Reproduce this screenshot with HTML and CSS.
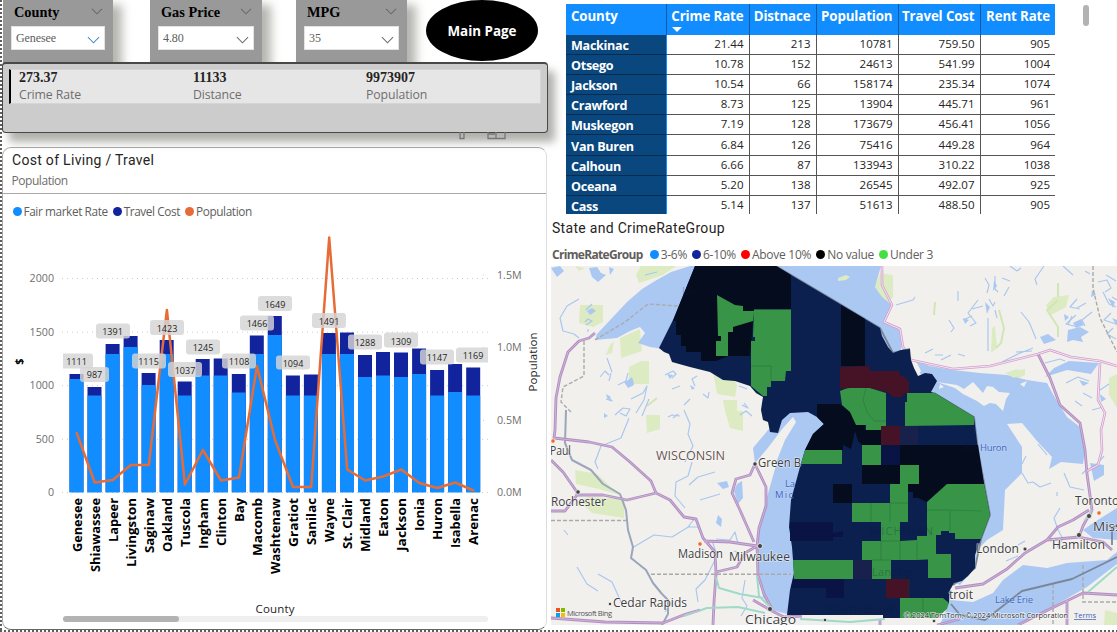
FILE: index.html
```html
<!DOCTYPE html>
<html lang="en">
<head>
<meta charset="utf-8">
<title>Michigan Cost of Living</title>
<link rel="stylesheet" href="styles.css">
</head>
<body>
<main class="report">
  <section class="left">
    <header class="filters">
      <div class="slicer"><div class="slicer-head"><span>County</span><svg class="chev" viewBox="0 0 12 7"><path d="M1 .8 6 5.8 11 .8"/></svg></div>
        <div class="select"><span>Genesee</span><svg class="chev big blue" viewBox="0 0 14 8"><path d="M1 1 7 7 13 1"/></svg></div></div>
      <div class="slicer"><div class="slicer-head"><span>Gas Price</span><svg class="chev" viewBox="0 0 12 7"><path d="M1 .8 6 5.8 11 .8"/></svg></div>
        <div class="select"><span>4.80</span><svg class="chev big" viewBox="0 0 14 8"><path d="M1 1 7 7 13 1"/></svg></div></div>
      <div class="slicer"><div class="slicer-head"><span>MPG</span><svg class="chev" viewBox="0 0 12 7"><path d="M1 .8 6 5.8 11 .8"/></svg></div>
        <div class="select"><span>35</span><svg class="chev big" viewBox="0 0 14 8"><path d="M1 1 7 7 13 1"/></svg></div></div>
      <button class="main-page">Main Page</button>
    </header>
    <div class="summary">
      <div class="metrics">
        <div class="metric"><b>273.37</b><span>Crime Rate</span></div>
        <div class="metric"><b>11133</b><span>Distance</span></div>
        <div class="metric"><b>9973907</b><span>Population</span></div>
      </div>
      <svg class="visual-icons" viewBox="0 0 48 8"><path d="M1 0V6.5H5V0M29 0V6.5H46V0M29 2H36M37 0V6.5"/></svg>
    </div>
    <article class="chart">
      <h2 class="title">Cost of Living / Travel</h2>
      <p class="subtitle">Population</p>
      <div class="legend"><span class="key fair">Fair market Rate</span><span class="key travel">Travel Cost</span><span class="key pop">Population</span></div>
      <svg class="plot" viewBox="3 222 544 407">
        <path class="grid" d="M62 278.5H488M62 332.2H488M62 385.7H488M62 439.3H488M62 492.5H488M483 275H488M483 347.5H488M483 420.5H488"/>
        <path class="bar-travel" d="M69.5 374h14V492h-14zM87.5 387h14V492h-14zM105.6 344h14V492h-14zM123.6 336h14V492h-14zM141.6 373h14V492h-14zM159.7 340h14V492h-14zM177.7 381.5h14V492h-14zM195.7 359h14V492h-14zM213.7 358.5h14V492h-14zM231.8 374h14V492h-14zM249.8 335.5h14V492h-14zM267.8 316h14V492h-14zM285.9 375.5h14V492h-14zM303.9 374.5h14V492h-14zM321.9 333h14V492h-14zM340 332.5h14V492h-14zM358 355h14V492h-14zM376 352h14V492h-14zM394 352.5h14V492h-14zM412.1 348.5h14V492h-14zM430.1 370h14V492h-14zM448.1 364h14V492h-14zM466.2 367.5h14V492h-14z"/>
        <path class="bar-fair" d="M69.5 379h14V492.5h-14zM87.5 395.5h14V492.5h-14zM105.6 354h14V492.5h-14zM123.6 347h14V492.5h-14zM141.6 385h14V492.5h-14zM159.7 354h14V492.5h-14zM177.7 395.5h14V492.5h-14zM195.7 375.5h14V492.5h-14zM213.7 375.5h14V492.5h-14zM231.8 392.5h14V492.5h-14zM249.8 354h14V492.5h-14zM267.8 335h14V492.5h-14zM285.9 395.5h14V492.5h-14zM303.9 395.5h14V492.5h-14zM321.9 354h14V492.5h-14zM340 354h14V492.5h-14zM358 377h14V492.5h-14zM376 375.5h14V492.5h-14zM394 377h14V492.5h-14zM412.1 374h14V492.5h-14zM430.1 395.5h14V492.5h-14zM448.1 392h14V492.5h-14zM466.2 395.5h14V492.5h-14z"/>
        <path class="line" d="M76.7 433 94.7 482.5 112.8 480 130.8 465 148.8 465 166.9 310 184.9 484.5 202.9 450 221 480.5 239 477.5 257 366 275 440 293 487 311.2 487 329.2 237.5 347.2 469.5 365.2 480.5 383.2 476.5 401.3 469.5 419.3 483 437.3 488 455.3 482.5 473.4 490.5"/>
        <g class="tags"><path d="M63 353.500h27a3 3 0 0 1 3 3v9a3 3 0 0 1-3 3h-27z"/><rect x="80" y="367" width="29" height="15" rx="3"/><rect x="96" y="323.500" width="34" height="15" rx="3"/><rect x="132" y="353.500" width="34" height="15" rx="3"/><rect x="150" y="320" width="34" height="15" rx="3"/><rect x="168" y="362" width="34" height="15" rx="3"/><rect x="186" y="339.500" width="34" height="15" rx="3"/><rect x="222" y="353.500" width="34" height="15" rx="3"/><rect x="240" y="315.500" width="34" height="15" rx="3"/><rect x="258" y="296" width="34" height="15" rx="3"/><rect x="276" y="355.500" width="34" height="14" rx="3"/><rect x="312" y="313" width="34" height="15" rx="3"/><rect x="348" y="334.500" width="34" height="15" rx="3"/><rect x="384" y="332.500" width="34" height="15" rx="3"/><rect x="420" y="349.500" width="34" height="15" rx="3"/><path d="M488 347.500h-29a3 3 0 0 0-3 3v9a3 3 0 0 0 3 3h29z"/></g>
        <g class="tag-text"><text x="76.500" y="365">1111</text><text x="94.500" y="378">987</text><text x="112.500" y="335">1391</text><text x="148.500" y="365">1115</text><text x="167" y="332">1423</text><text x="185" y="373.500">1037</text><text x="203" y="351">1245</text><text x="239" y="365">1108</text><text x="257" y="327">1466</text><text x="275" y="307.500">1649</text><text x="293" y="367">1094</text><text x="329" y="324.500">1491</text><text x="365" y="346">1288</text><text x="401" y="344.500">1309</text><text x="437" y="361">1147</text><text x="473" y="359">1169</text></g>
        <g class="axis end"><text x="54" y="282">2000</text><text x="54" y="336">1500</text><text x="54" y="389">1000</text><text x="54" y="443">500</text><text x="54" y="496">0</text></g>
        <g class="axis"><text x="497" y="279">1.5M</text><text x="497" y="351">1.0M</text><text x="497" y="424">0.5M</text><text x="497" y="496">0.0M</text></g>
        <g class="counties"><text transform="translate(81.500 498)rotate(-90)" textLength="54" lengthAdjust="spacingAndGlyphs">Genesee</text><text transform="translate(99.500 498)rotate(-90)" textLength="74" lengthAdjust="spacingAndGlyphs">Shiawassee</text><text transform="translate(117.500 498)rotate(-90)" textLength="44" lengthAdjust="spacingAndGlyphs">Lapeer</text><text transform="translate(135.500 498)rotate(-90)" textLength="69" lengthAdjust="spacingAndGlyphs">Livingston</text><text transform="translate(153.500 498)rotate(-90)" textLength="55" lengthAdjust="spacingAndGlyphs">Saginaw</text><text transform="translate(171.500 498)rotate(-90)" textLength="54" lengthAdjust="spacingAndGlyphs">Oakland</text><text transform="translate(189.500 498)rotate(-90)" textLength="49" lengthAdjust="spacingAndGlyphs">Tuscola</text><text transform="translate(207.500 498)rotate(-90)" textLength="51" lengthAdjust="spacingAndGlyphs">Ingham</text><text transform="translate(225.500 498)rotate(-90)" textLength="48" lengthAdjust="spacingAndGlyphs">Clinton</text><text transform="translate(243.500 498)rotate(-90)" textLength="24" lengthAdjust="spacingAndGlyphs">Bay</text><text transform="translate(261.500 498)rotate(-90)" textLength="58" lengthAdjust="spacingAndGlyphs">Macomb</text><text transform="translate(279.500 498)rotate(-90)" textLength="76" lengthAdjust="spacingAndGlyphs">Washtenaw</text><text transform="translate(297.500 498)rotate(-90)" textLength="49" lengthAdjust="spacingAndGlyphs">Gratiot</text><text transform="translate(315.500 498)rotate(-90)" textLength="47" lengthAdjust="spacingAndGlyphs">Sanilac</text><text transform="translate(333.500 498)rotate(-90)" textLength="44" lengthAdjust="spacingAndGlyphs">Wayne</text><text transform="translate(351.500 498)rotate(-90)" textLength="51" lengthAdjust="spacingAndGlyphs">St. Clair</text><text transform="translate(369.500 498)rotate(-90)" textLength="54" lengthAdjust="spacingAndGlyphs">Midland</text><text transform="translate(387.500 498)rotate(-90)" textLength="39" lengthAdjust="spacingAndGlyphs">Eaton</text><text transform="translate(405.500 498)rotate(-90)" textLength="53" lengthAdjust="spacingAndGlyphs">Jackson</text><text transform="translate(423.500 498)rotate(-90)" textLength="33" lengthAdjust="spacingAndGlyphs">Ionia</text><text transform="translate(441.500 498)rotate(-90)" textLength="42" lengthAdjust="spacingAndGlyphs">Huron</text><text transform="translate(459.500 498)rotate(-90)" textLength="50" lengthAdjust="spacingAndGlyphs">Isabella</text><text transform="translate(477.500 498)rotate(-90)" textLength="47" lengthAdjust="spacingAndGlyphs">Arenac</text></g>
        <text class="dollar" transform="translate(22.500 361.500)rotate(-90)">$</text>
        <text class="axis-title" transform="translate(537 362)rotate(-90)" textLength="59">Population</text>
        <text class="axis-title" x="275" y="613" textLength="39">County</text>
        <rect class="track" x="63" y="616" width="425" height="6" rx="3"/><rect class="thumb" x="63" y="616" width="116" height="6" rx="3"/>
      </svg>
    </article>
  </section>
  <section class="right">
    <div class="table-area">
      <table class="rates">
        <colgroup><col class="c1"><col class="c2"><col class="c3"><col class="c4"><col class="c5"><col class="c6"></colgroup>
        <thead><tr><th>County</th><th class="sorted">Crime Rate</th><th>Distnace</th><th>Population</th><th>Travel Cost</th><th>Rent Rate</th></tr></thead>
        <tbody>
          <tr><th>Mackinac</th><td>21.44</td><td>213</td><td>10781</td><td>759.50</td><td>905</td></tr>
          <tr><th>Otsego</th><td>10.78</td><td>152</td><td>24613</td><td>541.99</td><td>1004</td></tr>
          <tr><th>Jackson</th><td>10.54</td><td>66</td><td>158174</td><td>235.34</td><td>1074</td></tr>
          <tr><th>Crawford</th><td>8.73</td><td>125</td><td>13904</td><td>445.71</td><td>961</td></tr>
          <tr><th>Muskegon</th><td>7.19</td><td>128</td><td>173679</td><td>456.41</td><td>1056</td></tr>
          <tr><th>Van Buren</th><td>6.84</td><td>126</td><td>75416</td><td>449.28</td><td>964</td></tr>
          <tr><th>Calhoun</th><td>6.66</td><td>87</td><td>133943</td><td>310.22</td><td>1038</td></tr>
          <tr><th>Oceana</th><td>5.20</td><td>138</td><td>26545</td><td>492.07</td><td>925</td></tr>
          <tr><th>Cass</th><td>5.14</td><td>137</td><td>51613</td><td>488.50</td><td>905</td></tr>
        </tbody>
      </table>
      <i class="scroll"></i>
    </div>
    <h2 class="title map-title">State and CrimeRateGroup</h2>
    <div class="legend map-legend"><b>CrimeRateGroup</b><span class="key fair">3-6%</span><span class="key travel">6-10%</span><span class="key above">Above 10%</span><span class="key none">No value</span><span class="key under">Under 3</span></div>
    <svg class="map" viewBox="551 266 566 359">
      <rect class="land" x="551" y="266" width="566" height="359"/>
      <g class="park">
        <path d="M580 305h23v17l-10 5-14-4zM641 266h35l-13 9-24 8-3-8zM620 338l20-9 2 22-21 7zM629 367l12-6h8v23h-20zM713 371l16-2 8 16-2 12-18-3zM723 400h14v15l-12-4zM646 415h14v14l-13 4zM725 411h18v20l-13-3zM640 266l12 1-5 9zM575 470l22 4 15 14 11 8-24-7-23-5zM588 497l37 2-1 19-32-5-13-12zM880 273l13 2v22l-6 6-9-7-3-10zM1046 305l8-8 15-2-3 12-15 8zM1010 372l15-3v6l-8 4-9-4zM1109 378l8-4v34l-8-13zM1105 610l12 3v12h-13zM992 328l3-2 2 22-6 5zM575 266l10 2-6 3zM610 345l4-4-2 12-6 2z"/>
        <path class="park-line" d="M1058 300l-11 10 11 17v10M935 302l-1 13M999 310l5 18-3 15-5 5M1058 283v14M657 398l-10 8"/>
      </g>
      <g class="water">
        <path d="M690 266 671 272 655 281 642 289 627 302 612 318 597 334 595 340 617 338 630 331 640 327 645 333 638 343 650 347 670 350 710 266ZM770 266H881L875 287 882 297 892 305 884 322 900 330 902 345 898 360 840 320Z"/>
        <path d="M910 359 930 366 953 370 980 373 1007 375 1027 380 1047 383 1054 396 1067 417 1080 427 1085 450 1083 464 1061 462 1049 469 1052 457 1037 441 1022 423 1007 424 1022 447 1022 473 1005 490 1003 530 987 540 977 550 975 568 960 585 950 580 930 450 925 380Z"/>
        <path d="M755 463 753 448 768 430 790 412H811L826 424 810 460 800 614H787L772 610 763 597 759 570 757 543 760 523 767 497 777 462ZM950 600 973 602 993 593 1003 580 1023 565 1047 568 1067 563 1107 560 1117 552V564L1087 587 1073 595 1047 610 1018 625H940ZM1117 508 1093 523 1083 530 1093 538 1117 540ZM737 484l5-3 1 17-5 6-4-13zM1054 368l15-7 30 2-8 11-24-4-22 7zM1090 463l14 2v10l-10 6z"/>
        <path d="M551 268l9-2 4 5-7 6zM589 268l8-1 4 6 5 2-8 7-6-5zM609 267l5 2-4 6zM1040 337l8-3 8 6-12 4zM1068 330l12-3 9 5-8 5 2 5-10-2-6 2zM628 380l4-3 2 6-4 4zM717 483l10-2 2 6-6 2zM718 515l4 4-1 8-5-4z"/>
      </g>
      <g class="land"><path d="M937 382 957 385 964 389 973 382 983 393 987 386 993 387 999 392 1010 393 1006 399 1003 411 996 404 990 403 984 406 977 401 963 394 955 388ZM755 463 767 449 783 428 793 417 796 422 785 440 777 460 767 480ZM912 360l5 3 4 8-3 4-6-10zM940 384l4 3-5 2zM1020 384l7-3-3 6zM1030 374l6 1-3 5z"/></g>
      <path class="park" d="M838 278l8-3 4 2-4 3-8 1zM1005 373l12-4 5 4-8 5z"/>
      <g class="streams">
        <path d="M579 299l-12 7-7 12 3 13 11 3 5 4M586 310l6-6M585 322l3-3 4 2-6 4M588 329v3M607 358l5 14M618 385l8-4 2-8M631 399l12-6 4-7-3 14-8 13M665 375l8-4 3 3-4 4M680 386l-8 3M690 399l-6 6M703 394l5 4 1-6M734 372l5 3 5-3M747 389l-8-3M607 396l5 5-6-2M615 415l8-7 7 1-4 7-6-3M668 417l4-2 8 1M695 386l-3-7 5-3M600 377l5-6 4 4M742 405l6 3-4-5M611 373l-2 8M649 399l-7 17M673 418l5-4M645 275l12-3M660 308l-6 6M636 324l6-6M650 312l2-4"/>
        <path d="M684 410l6 14-2 10 5 12-8 16M692 462l-4 14-12 6-1 14 10 12M629 418l-8 20-20 8-6 16 3 7M632 548l22-13 18 2 18-11M577 567l10 17 11 7M598 574l14 8 10 22M712 540l5 16-12 24-9 9 2 13M715 472l-17 5-9 8M700 500l20-6M740 415l6-4 6 5M716 539l14 1 5-8 3 12M745 580l-3 18 5 8-6 10M695 518l-7 9 10 0M665 612l6-9M568 535l-4-5M734 551l5 2"/>
        <path d="M985 278l4 7-2 8M995 276v13l3 3M1009 287l-5 9M1002 278l8 3M978 300l-10 13 8 10-6 3M972 309l11-3M989 299l4 7 2-4M1021 312l8 10 3 7 4 10M896 305l17-5 2-3M949 320l5 8-3 4M958 291v10M1044 266l-9 13 2 6M1063 266l10 9M1077 299l-7 8 10 2M1086 303l-9 5M1076 315l-10 9 12 3M1092 312l-10 8 3 6M1098 282l9-2 4 8-6 4M1106 275l10 6M1103 292l6 12 7 3M1111 313l-7 7 12 4M1113 328l-6 6 9 5M935 355h8M941 360l10-5M965 356l-7-2M925 353l8-4M1002 362l16-8 15-6M1016 352l16-1M1066 383l12-6 11 4M1083 393l9 5M1075 401l7 5M1092 410l11-3M1100 390l9-6M1045 363l15-4 5 2"/>
        <path d="M1022 473l6 10 5-1 7 5 11-4M1047 455l-9-11M1057 492v4M1060 508l-6 10 4 12 5 9-6 8M1018 545l7-4M1006 561l12-5M1064 473l6 14 14 3M1096 465l8-9M1082 474l5-5M1022 464l4-8M995 310l2 8M972 316l-9 4M1068 325l4-9M1008 411l2 6M1030 388l5 3M1010 266l7 5 4-3M1112 297l5 3M1085 271l5 3M988 318v33"/>
      </g>
      <g class="lakes">
        <path d="M587 311l5-3 4 3-6 4zM624 382l7-3 3 6-6 3zM667 374l6 1-3 4zM606 394l5 3-3 3zM640 323l4-3 2 5zM648 310l4 2-3 3zM604 413l4 3-4 2zM690 385l5 3-3 2zM994 280l3 6-4 5zM963 318l6 2-4 4zM985 302l5 5-3 7zM1073 323l8-4 3 6-8 3zM1108 298l7 4-2 6zM1112 318l5 2v6zM1079 380l10 3-6 3zM1100 394l6 5-5 3zM1064 314l5 3-4 4zM1092 290l4 5-5 2z"/>
      </g>
      <path class="border-line" d="M551 520.500H627M651 574.300H791M584 341V376L563 387 561 402 571 412M595 340 625 322 648 304 678 306M1093 266V288L1100 318 1117 352M1053 584V625M1083 565V602H1117"/>
      <path class="river-border" d="M566 410 565 443 572 460 591 470 603 484 620 494 626 510 628 530 633 547 631 558 646 570 653 583 662 594 668 600 668 614 662 625"/>
      <g class="roads">
        <path id="road" d="M595 333 589 338 579 341 568 352 560 377 556 398 555 430 554 438 589 442 612 447 630 462 651 481 656 493 670 500 684 517 696 519 703 538 715 552 716 574 714 602 713 625M551 460 563 472 577 492 577 495 603 495 627 500 656 493M551 511H565L577 495M704 541 730 542 757 546 758 575 764 594 772 609M755 464 750 475 736 479 732 493 739 508 754 542M755 464 766 487 766 506 759 528 757 546M716 572 737 567 745 553 757 546M551 618 605 622 663 623 686 614 700 610M753 600 772 611 784 617 802 616"/>
        <path id="pink-road" class="pink" d="M882 266V285L892 305 884 322 900 329 903 347 911 360 953 369 990 366 1038 354 1050 350 1071 357 1100 361 1117 366M1100 363 1098 400 1105 413 1101 430 1102 450 1098 465 1087 471"/>
        <path id="ontario-road" d="M1038 354 1050 378 1060 405 1080 423 1085 450 1087 474 1092 510 1089 517M955 588 983 584 1007 569 1025 553 1047 540 1058 527 1073 520 1089 510M1047 540 1079 537 1083 526 1089 515M1079 537 1103 542 1112 550M1018 625 1050 609 1083 593 1117 595M1067 600V625M937 625 960 619M880 620V625"/>
        <path class="toll" d="M716 577 719 588 740 594 763 598M684 616 707 608 738 607 765 613M757 576 759 596 772 609M800 619 850 622 885 619M1085 520 1092 510M1117 567 1088 592"/>
        <g class="road-core"><use href="#road"/><use href="#ontario-road"/></g>
        <path class="pink-core" d="M882 266V285L892 305 884 322 900 329 903 347 911 360 953 369 990 366 1038 354 1050 350 1071 357 1100 361 1117 366M1100 363 1098 400 1105 413 1101 430 1102 450 1098 465 1087 471"/>
      </g>
      <path class="us-border" d="M776 266 840 304 880 328 893 353 910 349M934 393 974 417 978 450 990 515 981 539 975 568 953 585M951 604 960 615 985 620 1022 591 1072 579 1117 557M1112 545V528L1117 525"/>
      <g class="michigan">
        <path class="navy" d="M695 266H776L791 275 840 304 880 328 882 336 888 347 893 353 901 350 910 349 911 360 914 368 918 376 925 373 932 374 937 381 931 392 935 393 974 417 978 450 984 484 990 515 981 539 975 555 975 568 968 576 962 581 954 583 950 590 949 603 937 618H883V615H787L790 590 794 573 792 547 789 527 791 500 800 467 805 450 813 434 824 424 817 417 808 412 790 413 782 420 778 433 770 432 768 422 763 420 761 410 762 403 763 397 756 393 750 386 735 381 723 380 710 372 690 367 672 362 669 354 664 352 659 348 673 320Z"/>
        <path class="black" d="M695 266H776L791 275V309H754L750 356H728L716 361H701V352H686V346H681V335H676V321H673ZM841 305 865 319V366H841ZM817 404H840L850 412 856 424H865V430H881V445H862L858 441 855 431 851 449 843 445V450H805L813 434 824 424 817 417ZM900 445H978L984 484H947L927 502 918 498H913V492H908V484H919V465H900ZM862 465H900V484H862ZM833 484H852V503H833Z"/>
        <path class="indigo" d="M881 445H900V465H881ZM790 522H833V533L843 531V537H833V541H790ZM793 579H844V598H826V588H791Z"/>
        <path class="violet" d="M900 426H918V445H900ZM853 560H872V579H853Z"/>
        <path class="green" d="M717 295 735 305 743 306V311H754L753 321 733 327V332H728V356H716V341H721V336H718ZM754 309.500H791V371H786L785 381H771V387H767V396H763L751 386V341H755V337H753ZM840 391 850 387 870 388 886 393V430H866V425H856L850 412 842 405ZM907 393H935L974 417V425L905 426V402H907ZM805 450H842V464H801ZM862 445H881V465H862ZM900 465H919V484H900ZM890 484H908V522H890ZM852 503H890V522H852ZM881 522H900V541H881ZM862 541H900L917 540V536H936V559L917 560H862ZM872 560H891V579H872ZM928 554H951V578H928ZM793 560H853V579H794ZM947 484H984L990 515 981 539H955V533H949V531H941V535H936V536H927V502ZM900 598H943L949 603 947 609 937 618H900Z"/>
        <path class="red" d="M840 367 869 366 870 371H899L900 376 905 377 909 382V393H905L902 397H893L887 392 870 388H850L840 389ZM881 426H900V445H881ZM886 579H909V598H886Z"/>
        <path class="county-line" d="M866 388 863 400 867 412 874 421H886M751 366H771V381M871 503V522M890 503V522M890 503H908M881 541V560M900 541V560M917 541V560M881 541H900M872 560H891M927 510H950L981 511M950 511V531M923 598V618M909 579V598"/>
      </g>
      <g class="cities"><circle cx="755" cy="464" r="2.200"/><circle cx="578" cy="492" r="2.200"/><circle cx="760" cy="546" r="2.500"/><circle cx="770" cy="609" r="2.500"/><circle cx="610" cy="604" r="1.700"/><circle cx="825" cy="620" r="1.800"/><circle cx="934" cy="621" r="1.800"/><circle cx="1025" cy="549" r="2"/><circle cx="1079" cy="535" r="2.500"/><circle cx="1089" cy="516" r="2.500"/><circle class="capital" cx="553" cy="441" r="2.200"/><circle class="capital" cx="700" cy="544" r="2.200"/><circle class="capital" cx="1099" cy="513" r="2.200"/></g>
      <g class="hidden-labels"><text x="682" y="295" textLength="57">Lake Superior</text><text x="870" y="535" textLength="63">MICHIGAN</text><text x="872" y="576" textLength="41">Lansing</text><text x="828" y="613" textLength="65">South Bend</text><text x="957" y="451" textLength="20">Lake</text></g>
      <g class="places">
        <text class="state" x="656" y="460" textLength="69" lengthAdjust="spacingAndGlyphs">WISCONSIN</text>
        <text x="550" y="455" textLength="21" lengthAdjust="spacingAndGlyphs">Paul</text><text x="551" y="506" textLength="55" lengthAdjust="spacingAndGlyphs">Rochester</text><text x="758" y="467" textLength="43" lengthAdjust="spacingAndGlyphs">Green B</text><text x="678" y="557.500" textLength="45" lengthAdjust="spacingAndGlyphs">Madison</text><text x="729" y="561" textLength="61" lengthAdjust="spacingAndGlyphs">Milwaukee</text><text x="613" y="607" textLength="74" lengthAdjust="spacingAndGlyphs">Cedar Rapids</text><text x="745" y="624" textLength="51" lengthAdjust="spacingAndGlyphs">Chicago</text><text x="949" y="599" textLength="24" lengthAdjust="spacingAndGlyphs">troit</text><text x="976" y="553" textLength="43" lengthAdjust="spacingAndGlyphs">London</text><text x="1052" y="548.500" textLength="53" lengthAdjust="spacingAndGlyphs">Hamilton</text><text class="large" x="1075" y="505" textLength="44" lengthAdjust="spacingAndGlyphs">Toronto</text><text class="large" x="1093" y="531">Miss</text>
        <g class="lake-name"><text x="785" y="487" textLength="10">La</text><text x="775" y="498" textLength="18">Mic</text><text x="980" y="451" textLength="27">Huron</text><text x="995" y="603" textLength="38">Lake Erie</text></g>
      </g>
      <path fill="#f25022" d="M556 608h4v4h-4z"/><path fill="#7fba00" d="M561 608h4v4h-4z"/><path fill="#00a4ef" d="M556 613h4v4h-4z"/><path fill="#ffb900" d="M561 613h4v4h-4z"/>
      <text class="bing" x="567" y="615.500" textLength="45">Microsoft Bing</text>
      <text class="credit" x="904" y="618" textLength="164">© 2024 TomTom, © 2024 Microsoft Corporation</text>
      <text class="terms" x="1074" y="618" textLength="22">Terms</text>
    </svg>
  </section>
</main>
</body>
</html>
```
FILE: styles.css
```css
*{box-sizing:border-box}
body{margin:0;background:#fff;overflow:hidden;font-family:"Open Sans","Noto Sans",sans-serif}
.report{width:1117px;height:632px;display:grid;grid-template-columns:548px 569px;position:relative;overflow:hidden}
.report::before{content:"";position:absolute;z-index:5;left:0;top:0;width:2px;height:630px;background:repeating-linear-gradient(#605e5c 0 2px,#fff 2px 4px)}
.report::after{content:"";position:absolute;z-index:5;left:0;top:630px;width:1117px;height:2px;background:repeating-linear-gradient(90deg,#605e5c 0 2px,#fff 2px 4px)}
.left{display:flex;flex-direction:column;padding-left:2px;height:630px}
.filters{display:flex;height:62px;padding-left:1px;align-items:flex-start}
.slicer{width:110px;height:66px;background:#999;padding:5px 8px 0;margin-right:37px;box-shadow:9px 5px 9px rgba(80,80,70,.42);flex:none}
.slicer:nth-child(2){width:112px;margin-right:34px}
.slicer:nth-child(3){width:111px;margin-right:19px}
.slicer-head{display:flex;justify-content:space-between;align-items:flex-start;height:21px;padding:0 2px 0 3px;font:bold 14.3px/15px "Liberation Serif",serif;color:#000}
.chev{width:12px;height:7px;margin-top:3px;fill:none;stroke:#6c6a68;stroke-width:1.1}
.chev.big{width:13px;height:8px;margin-top:4px}
.chev.blue{stroke:#3f91bd}
.select{background:#fff;border:1px solid #e3e3e3;height:24px;display:flex;justify-content:space-between;align-items:center;padding:0 4px 0 4px;font:12px "Liberation Serif",serif;letter-spacing:-.1px;color:#605e5c}
.main-page{width:112px;height:61px;border:0;border-radius:50%;background:#000;color:#fff;font:bold 13.4px "Open Sans",sans-serif;padding:0;flex:none;white-space:nowrap}
.summary{position:relative;z-index:2;width:545.5px;height:71px;background:#ccc;border:1px solid #484848;border-width:2px 1px 1px;border-radius:4px;padding:5px 6px;box-shadow:7px 9px 9px rgba(80,80,70,.45);flex:none}
.metrics{display:grid;grid-template-columns:174px 173px 1fr;height:35px;background:#e6e6e6;border:1px solid #d5d5d5;border-left:2px solid #000;padding-left:8px}
.metric b{display:block;font:bold 14px/16px "Liberation Serif",serif;color:#252423}
.metric span{display:block;font-size:12.3px;line-height:17px;color:#706e6c;letter-spacing:-.1px}
.visual-icons{position:absolute;left:456px;top:68px;width:48px;height:8px;fill:none;stroke:#777;stroke-width:1.3}
.chart{width:545px;height:483px;margin-top:14px;border:1px solid #aaa;border-color:#aaa #ddd #666 #aaa;border-radius:9px;background:#fff;display:flex;flex-direction:column;flex:none}
.title{font:400 14px/18px Roboto,sans-serif;letter-spacing:.3px;color:#252423;margin:3px 0 0 9px;height:18px}
.subtitle{font-size:12px;line-height:16px;color:#706e6c;margin:4px 0 0;padding:0 0 3px 8.5px;height:24px;border-bottom:1px solid #aaa;letter-spacing:-.45px}
.legend{display:flex;align-items:center;height:18px;color:#605e5c;font-size:12px;letter-spacing:-.28px;white-space:nowrap}
.chart .legend{margin:9px 0 0 9.5px;font-size:11.8px;letter-spacing:-.4px}
.key{display:flex;align-items:center;gap:2px;margin-right:5px}
.key::before{content:"";width:9px;height:9px;border-radius:50%;background:currentColor;flex:none}
.fair::before{background:#118dff}.travel::before{background:#12239e}.pop::before{background:#e66c37}.above::before{background:#f00}.none::before{background:#000}.under::before{background:#43df43}
.plot{width:544px;height:407px;margin-top:3px;flex:none}
.plot text,.map text{font-family:"Open Sans","Noto Sans",sans-serif}
.grid{fill:none;stroke:#ccc;stroke-width:1;stroke-dasharray:1 4}
.bar-travel{fill:#12239e}.bar-fair{fill:#118dff}
.line{fill:none;stroke:#e66c37;stroke-width:2.5;stroke-linejoin:round;stroke-linecap:round}
.tags{fill:#d4d4d4;fill-opacity:.82}
.tag-text{font-size:9px;text-anchor:middle;fill:#252423}
.axis{font-size:10.7px;fill:#706e6c}.end{text-anchor:end}
.counties{font-size:12.6px;font-weight:700;fill:#000;text-anchor:end}
.dollar{font-size:11px;font-weight:700;text-anchor:middle}
.axis-title{font-size:11.5px;text-anchor:middle;fill:#252423}
.track{fill:#efefef}.thumb{fill:#b3b3b3}
.right{display:flex;flex-direction:column;padding-left:3px}
.table-area{display:flex;align-items:flex-start;height:214px;padding:4px 0 0 15px;overflow:hidden;flex:none}
.rates{width:489px;table-layout:fixed;border-collapse:separate;border-spacing:0;font-size:11.5px;color:#252423}
.c1{width:100.5px}.c2{width:83px}.c3{width:67px}.c4{width:82px}.c5{width:82px}.c6{width:74.500px}
.rates thead th{height:31px;background:#118dff;color:#fff;font-size:13.3px;line-height:17px;padding:4px 5px 0 0;text-align:right;vertical-align:top;border-right:1px solid #115a9f;white-space:nowrap;letter-spacing:-.12px}
.rates thead th:first-child{text-align:left;padding-left:5px}
.rates th:last-child,.rates td:last-child{border-right:0}
.sorted{position:relative}
.sorted::after{content:"";position:absolute;left:5px;top:23px;border:5px solid transparent;border-top-color:#fff;border-bottom:0}
.rates tbody th{background:#09477e;color:#fff;font-size:12.6px;font-weight:700;text-align:left;padding:2px 0 0 5px;border-right:1px solid #118dff;border-bottom:1px solid #082c4d;letter-spacing:-.3px}
.rates tbody tr{height:20.1px}
.rates tbody th,.rates td{height:20.1px;line-height:17px}
.rates td{padding:0 5px 2px 0;text-align:right;border-right:1px solid #555;border-bottom:1px solid #555}
.rates tr:last-child th,.rates tbody tr:last-child td{border-bottom:0}
.rates thead tr th:last-child{padding-right:5px}
.scroll{width:6px;height:21px;border-radius:3px;background:#b3b3b3;margin:1px 0 0 28px}
.map-title{margin:5px 0 0 1px;flex:none}
.map-legend{margin:8px 0 3px 1px;flex:none}
.map-legend b{margin-right:7px;color:#605e5c;letter-spacing:-.68px}
.map{width:566px;height:359px;flex:none}
.land{fill:#f1f0ed}.water,.lakes{fill:#abc8f3}.park{fill:#dcebc2}
.park-line{fill:none;stroke:#d2e6b5;stroke-width:2}
.streams{fill:none;stroke:#a9c6ef;stroke-width:1.15;stroke-linejoin:round}
.border-line{fill:none;stroke:#aaa;stroke-width:1.4;stroke-dasharray:4 2}
.river-border{fill:none;stroke:#9ba6bd;stroke-width:2;stroke-linejoin:round}
.roads{fill:none;stroke:#b08fc0;stroke-width:2.8;stroke-linejoin:round}
.road-core{stroke:#cfb2d9;stroke-width:1}
.pink{stroke:#d3a0ce;stroke-width:2.6}.pink-core{stroke:#f4e4f1;stroke-width:1}.toll{stroke:#9fdac8;stroke-width:2}
.us-border{fill:none;stroke:#7a8799;stroke-width:1.8;stroke-linejoin:round}
.navy{fill:#0b204e}.black{fill:#050c1d}.indigo{fill:#091344}.violet{fill:#17214b}.green{fill:#389547}.red{fill:#461326}
.county-line{fill:none;stroke:#15532f;stroke-opacity:.35;stroke-width:.8}
.cities{fill:#444;stroke:#fff;stroke-width:.7}.capital{fill:#f06a2a}
.hidden-labels{fill:#0a183b;font-size:11px;opacity:.25}
.places{font-size:12.5px;fill:#404040;paint-order:stroke;stroke:#fff;stroke-width:1.2;stroke-opacity:.7}
.places .large{font-size:13.5px}
.places .state{font-size:12.2px;fill:#68534e}
.places .lake-name{font-size:9.5px;fill:#4166be;stroke-opacity:.2}
.bing{font-size:7.5px;fill:#555}
.credit{font-size:7.5px;fill:#333;paint-order:stroke;stroke:#fff;stroke-width:1.5;stroke-opacity:.65}
.terms{font-size:7.5px;fill:#3f63b5;text-decoration:underline}
```
